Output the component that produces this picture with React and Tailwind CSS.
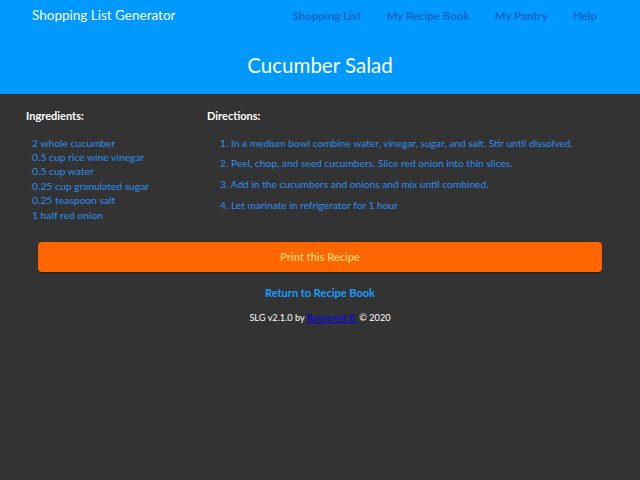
import React from 'react';

const ingredients = [
  '2 whole cucumber',
  '0.5 cup rice wine vinegar',
  '0.5 cup water',
  '0.25 cup granulated sugar',
  '0.25 teaspoon salt',
  '1 half red onion',
];

const directions = [
  'In a medium bowl combine water, vinegar, sugar, and salt. Stir until dissolved.',
  'Peel, chop, and seed cucumbers. Slice red onion into thin slices.',
  'Add in the cucumbers and onions and mix until combined.',
  'Let marinate in refrigerator for 1 hour',
];

const navLinks = ['Shopping List', 'My Recipe Book', 'My Pantry', 'Help'];

const App = () => {
  return (
    <div className="min-h-[480px] bg-[#333333] font-['Lato',sans-serif]">
      {/* Header */}
      <header className="h-[94px] bg-[#0099ff]">
        <div className="flex items-center justify-between pl-[32px] pr-[43px] pt-[1px] h-[30px]">
          <span className="text-[13.5px] text-white">Shopping List Generator</span>
          <nav className="flex gap-[25px]">
            {navLinks.map((link) => (
              <a key={link} className="text-[11.5px] font-bold text-[#0a66c8]">{link}</a>
            ))}
          </nav>
        </div>
        <h1 className="text-center text-[20.5px] text-white mt-[20px]">Cucumber Salad</h1>
      </header>

      {/* Recipe body */}
      <main className="flex pt-[14px]">
        <section className="w-[207px] pl-[26px]">
          <h2 className="text-[11px] font-bold text-white">Ingredients:</h2>
          <ul className="mt-[11px] pl-[6px] text-[10.3px] leading-[14.4px] text-[#2d8ef0]">
            {ingredients.map((item) => (
              <li key={item}>{item}</li>
            ))}
          </ul>
        </section>
        <section className="flex-1">
          <h2 className="text-[11px] font-bold text-white">Directions:</h2>
          <ol className="mt-[11px] pl-[13px] text-[10.2px] leading-[14px] text-[#2d8ef0] flex flex-col gap-[6.8px]">
            {directions.map((step, i) => (
              <li key={i}>{i + 1}. {step}</li>
            ))}
          </ol>
        </section>
      </main>

      {/* Actions */}
      <div className="px-[38px] mt-[20px]">
        <button className="w-full h-[30px] rounded-[4px] bg-[#ff6600] text-[11px] font-bold text-[#ffcc66] shadow-[0_1px_2px_rgba(0,0,0,0.4)]">
          Print this Recipe
        </button>
      </div>
      <div className="mt-[12px] text-center leading-[14px]">
        <a className="text-[11px] font-bold text-[#1a9cff]">Return to Recipe Book</a>
      </div>
      <footer className="mt-[11px] text-center text-[9.2px] text-white">
        SLG v2.1.0 by <a className="text-[#0000ee] underline">Roosevelt B.</a> © 2020
      </footer>
    </div>
  );
};

export default App;
